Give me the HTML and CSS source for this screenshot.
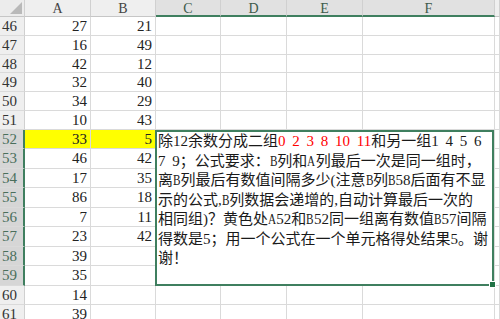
FILE: index.html
```html
<!DOCTYPE html>
<html lang="zh-CN">
<head>
  <meta charset="UTF-8">
  <meta name="viewport" content="width=device-width, initial-scale=1.0">
  <title>Sheet1</title>
  <link rel="stylesheet" href="styles.css">
</head>
<body>
  <div class="wrap">
    <div id="sheet" class="sheet">
      <div class="corner"></div>
      <div class="colhead">A</div>
      <div class="colhead">B</div>
      <div class="colhead sel">C</div>
      <div class="colhead sel">D</div>
      <div class="colhead sel">E</div>
      <div class="colhead sel">F</div>
      <div class="colhead"></div>
    </div>

    <div class="textbox">
      除12余数分成二组<span class="red">0 2 3 8 10 11</span>和另一组1 4 5 6<br>
      7 9；公式要求：<span class="lat">B</span>列和<span class="lat">A</span>列最后一次是同一组时，<br>
      离<span class="lat">B</span>列最后有数值间隔多少(注意<span class="lat">B</span>列<span class="lat">B</span>58后面有不显<br>
      示的公式,<span class="lat">B</span>列数据会递增的,自动计算最后一次的<br>
      相同组)？黄色处<span class="lat">A</span>52和<span class="lat">B</span>52同一组离有数值<span class="lat">B</span>57间隔<br>
      得数是5；用一个公式在一个单元格得处结果5。谢<br>
      谢！
      <div class="handle"></div>
    </div>
  </div>

  <script>
    const sheet = document.getElementById('sheet');
    const rows = [
      [46, 27, 21], [47, 16, 49], [48, 42, 12], [49, 32, 40],
      [50, 34, 29], [51, 10, 43], [52, 33, 5], [53, 46, 42],
      [54, 17, 35], [55, 86, 18], [56, 7, 11], [57, 23, 42],
      [58, 39, ''], [59, 35, ''], [60, 14, ''], [61, 39, '']
    ];

    rows.forEach(([n, a, b]) => {
      const head = document.createElement('div');
      head.className = 'rowhead' + (n >= 52 && n <= 59 ? ' sel' : '');
      head.textContent = n;
      sheet.appendChild(head);

      [a, b, '', '', '', '', ''].forEach((val, i) => {
        const cell = document.createElement('div');
        cell.className = 'cell';
        if (n === 52 && i < 2) cell.classList.add('yellow');
        cell.textContent = val;
        sheet.appendChild(cell);
      });
    });
  </script>
</body>
</html>
```

FILE: styles.css
```css
body {
  margin: 0;
  background: #fff;
  overflow: hidden;
  font-family: "Liberation Serif", "Noto Sans CJK SC", serif;
}
.wrap {
  position: relative;
}
.sheet {
  display: grid;
  grid-template-columns: 25px 66px 65px 65px 66px 76px 132px 5px;
  grid-template-rows: 17px repeat(6, 18.8px);
  grid-auto-rows: 19.5px;
  font-size: 15px;
  color: #222;
}
.corner {
  background: #ececec;
  border-right: 1px solid #d0d0d0;
  border-bottom: 1px solid #c6c6c6;
  position: relative;
}
.corner::after {
  content: "";
  position: absolute;
  right: 2px;
  bottom: 2px;
  border-left: 12px solid transparent;
  border-bottom: 12px solid #b9b9b9;
}
.colhead {
  background: #efefef;
  border-right: 1px solid #d0d0d0;
  border-bottom: 1px solid #c6c6c6;
  text-align: center;
  font-size: 14px;
  line-height: 17px;
  color: #444;
}
.colhead.sel {
  background: #e1e1e1;
  border-bottom: 2px solid #3f7f5f;
  color: #3d5a4a;
}
.rowhead {
  box-sizing: border-box;
  background: #efefef;
  border-right: 1px solid #d0d0d0;
  border-bottom: 1px solid #dadada;
  font-size: 15px;
  line-height: 19px;
  padding-left: 2px;
  color: #333;
}
.rowhead.sel {
  background: #d6d6d6;
  border-right: 2px solid #3f7f5f;
  color: #4a6f5c;
}
.cell {
  box-sizing: border-box;
  border-right: 1px solid #dadada;
  border-bottom: 1px solid #dadada;
  text-align: right;
  padding-right: 3px;
  line-height: 19px;
}
.yellow {
  background: #ffff00;
}
.textbox {
  position: absolute;
  left: 155px;
  top: 130px;
  width: 339px;
  height: 156px;
  box-sizing: border-box;
  background: #fff;
  border: 2px solid #3f7f5f;
  padding: 0 0 0 1px;
  font-size: 15px;
  line-height: 19.5px;
  word-spacing: 0.2em;
  white-space: nowrap;
  color: #1a1a1a;
}
.lat {
  display: inline-block;
  transform: scaleX(0.75);
  transform-origin: left center;
  margin-right: -2.5px;
}
.red {
  color: #f00;
}
.handle {
  position: absolute;
  right: -4px;
  bottom: -4px;
  width: 5px;
  height: 5px;
  background: #217346;
  border: 1px solid #fff;
}
```
